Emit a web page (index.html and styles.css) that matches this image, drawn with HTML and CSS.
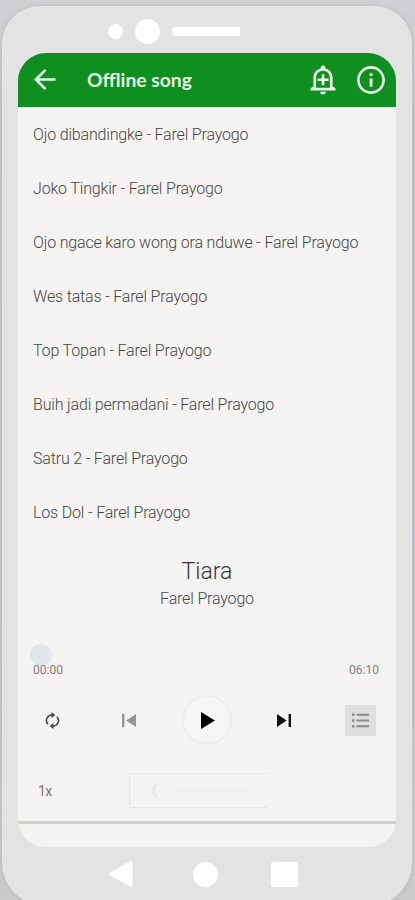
FILE: index.html
```html
<!DOCTYPE html>
<html lang="id">
<head>
<meta charset="utf-8">
<title>Offline song</title>
<link rel="stylesheet" href="styles.css">
</head>
<body>
<div class="phone">
  <div class="speaker"><i class="sensor"></i><i class="camera"></i><i class="grille"></i></div>
  <main class="screen">
    <header class="bar">
      <svg class="back" viewBox="0 0 24 24"><path d="M22.500 12H2M12 2L2 12l10 10" fill="none" stroke="currentColor" stroke-width="2.800"/></svg>
      <h1>Offline song</h1>
      <svg class="bell" viewBox="0 0 26 30"><path d="M13 .5a2.400 2.400 0 0 1 2.400 2.400v.7c4.400 1.100 7.200 4.700 7.200 9.400v8.500l2.900 1.700v2.300H.5v-2.300l2.900-1.700V13c0-4.700 2.800-8.300 7.200-9.400v-.7A2.400 2.400 0 0 1 13 .5zM13 5.700c-4 0-6.900 3-6.900 7.300v9.700h13.800V13c0-4.300-2.900-7.300-6.900-7.300zM11.700 9.200h2.700v4.200h4.200v2.700h-4.200v4.200h-2.700v-4.200H7.500v-2.700h4.200zM10.300 26.700h5.400a2.700 2.700 0 0 1-5.400 0z" fill="currentColor" fill-rule="evenodd"/></svg>
      <svg class="info" viewBox="0 0 28 28"><circle cx="14" cy="14" r="12.600" fill="none" stroke="currentColor" stroke-width="2.600"/><path d="M12.600 7.200h2.900v2.800h-2.900zM12.600 12.500h2.900v8.300h-2.900z" fill="currentColor"/></svg>
    </header>
    <ul class="songs">
      <li>Ojo dibandingke - Farel Prayogo</li>
      <li>Joko Tingkir - Farel Prayogo</li>
      <li>Ojo ngace karo wong ora nduwe - Farel Prayogo</li>
      <li>Wes tatas - Farel Prayogo</li>
      <li>Top Topan - Farel Prayogo</li>
      <li>Buih jadi permadani - Farel Prayogo</li>
      <li>Satru 2 - Farel Prayogo</li>
      <li>Los Dol - Farel Prayogo</li>
    </ul>
    <section class="now">
      <h2>Tiara</h2>
      <p>Farel Prayogo</p>
    </section>
    <div class="seek"><i class="knob"></i></div>
    <div class="times"><span>00:00</span><span>06:10</span></div>
    <div class="controls">
      <svg class="repeat" viewBox="0 0 16 18"><g fill="none" stroke="currentColor" stroke-width="1.700"><path d="M3.200 13A5.800 5.800 0 0 1 7.600 3.200M12.800 5A5.800 5.800 0 0 1 8.400 14.800"/></g><path d="M7 0l4 3.200-4 3.200zM9 11.600v6.400l-4-3.200z" fill="currentColor"/></svg>
      <svg class="prev" viewBox="0 0 14 13"><path d="M0 0h2.400v13H0zM14 0v13L4 6.500z" fill="currentColor"/></svg>
      <div class="play"><svg viewBox="0 0 14 17"><path d="M0 0v17l14-8.500z" fill="currentColor"/></svg></div>
      <svg class="next" viewBox="0 0 14 13"><path d="M11.600 0H14v13h-2.400zM0 0v13l9.700-6.500z" fill="currentColor"/></svg>
      <div class="queue"><svg viewBox="0 0 17 15"><path d="M0 .5h2.500V3H0zM0 6.200h2.500v2.500H0zM0 12h2.500v2.500H0zM4.500.7H17v2H4.500zM4.500 6.500H17v2H4.500zM4.500 12.200H17v2H4.500z" fill="currentColor"/></svg></div>
    </div>
    <div class="extras">
      <span class="speed">1x</span>
      <div class="timer"><svg viewBox="0 0 12 16"><path d="M10 0a8 8 0 1 0 0 16C5 13 5 3 10 0z" fill="currentColor"/></svg><i></i></div>
    </div>
  </main>
  <nav class="keys">
    <svg viewBox="0 0 24 26"><path d="M22 1.500v23L1.500 13z" fill="#fff" stroke="#fff" stroke-width="3" stroke-linejoin="round"/></svg>
    <i class="home"></i><i class="recent"></i>
  </nav>
</div>
</body>
</html>
```

FILE: styles.css
```css
* { box-sizing: border-box; margin: 0; padding: 0; }
svg { display: block; flex: none; }
i { display: block; flex: none; }
body {
  height: 900px;
  overflow: hidden;
  padding: 6px 3px 0 2px;
  background: linear-gradient(#d0d1d3, #bfc7d0 12%, #bdc4cc 55%, #c6c6c6 80%, #cacaca);
  font-family: Roboto, sans-serif;
}
.phone {
  height: 900px;
  padding: 0 16px;
  border-radius: 38px 38px 44px 44px;
  background: #e3e3e3;
  box-shadow: 0 0 4px #b4b6b8, inset 0 0 2px #eee;
}
.speaker {
  display: flex;
  align-items: center;
  height: 47px;
  padding: 3px 0 0 90px;
}
.sensor { width: 15px; height: 15px; border-radius: 50%; background: #fff; }
.camera { width: 25px; height: 25px; margin-left: 12px; border-radius: 50%; background: #fff; }
.grille { width: 68px; height: 9px; margin-left: 12px; border-radius: 4px 0 0 4px; background: #fff; }
.screen {
  height: 794px;
  border-radius: 28px 28px 27px 27px;
  overflow: hidden;
  background: #f5f4f2;
  color: #454545;
  font-weight: 300;
}
.bar {
  display: flex;
  align-items: center;
  height: 54px;
  padding: 0 11px 1px 16px;
  background: #0e8f20;
  color: #e6fae5;
}
.back { width: 23px; height: 23px; }
.bar h1 {
  flex: 1;
  margin-left: 30px;
  font: 700 19.300px/26px Lato, sans-serif;
}
.bell { width: 26px; height: 30px; margin-right: 21px; }
.info { width: 28px; height: 28px; }
.songs { list-style: none; }
.songs li {
  display: flex;
  align-items: center;
  height: 54px;
  padding: 1px 0 0 15px;
  font-size: 16px;
  letter-spacing: -.17px;
  white-space: nowrap;
}
.now { padding-top: 19px; text-align: center; }
.now h2 { font-size: 23px; font-weight: 300; line-height: 28px; color: #353535; }
.now p { font-size: 16px; line-height: 20px; padding-top: 3px; letter-spacing: -.17px; }
.seek {
  display: flex;
  align-items: center;
  height: 22px;
  margin: 35px 17px 0 12px;
  background: linear-gradient(#f1f0ee, #f1f0ee) center / 100% 1px no-repeat;
}
.knob { width: 22px; height: 22px; border-radius: 50%; background: #e2e6ea; }
.times {
  display: flex;
  justify-content: space-between;
  height: 12px;
  margin-top: -3px;
  padding: 0 17px 0 15px;
  font-size: 12px;
  line-height: 14px;
  font-weight: 400;
  color: #7d7d7d;
}
.controls {
  display: flex;
  align-items: center;
  height: 50px;
  margin-top: 20px;
  padding-left: 27px;
}
.repeat { width: 15px; height: 17px; color: #444; }
.prev { width: 14px; height: 13px; margin-left: 62px; color: #959595; }
.play {
  display: flex;
  align-items: center;
  justify-content: center;
  width: 50px;
  height: 50px;
  margin-left: 46px;
  padding-left: 2px;
  border: 2px solid #ebeded;
  border-radius: 50%;
  background: #f7f6f4;
  color: #000;
}
.play svg { width: 14px; height: 17px; }
.next { width: 14px; height: 13px; margin-left: 45px; color: #111; }
.queue {
  display: flex;
  align-items: center;
  justify-content: center;
  width: 31px;
  height: 31px;
  margin-left: 54px;
  background: #dfdfde;
  color: #8a8b8a;
}
.queue svg { width: 17px; height: 15px; }
.extras {
  display: flex;
  align-items: center;
  height: 79px;
  padding: 15px 0 0 20px;
  border-bottom: 3px solid #d0cfcc;
}
.speed { width: 91px; font-size: 14px; font-weight: 400; letter-spacing: -.5px; color: #757575; }
.timer {
  display: flex;
  align-items: center;
  width: 139px;
  height: 35px;
  padding-left: 20px;
  border: 1.500px solid #e5e4e2;
  border-right: 0;
  border-radius: 2px 0 0 2px;
  color: #e5e9eb;
}
.timer svg { width: 11px; height: 16px; }
.timer i { width: 80px; height: 2px; margin-left: 12px; background: #f1f1ef; }
.keys { display: flex; align-items: center; height: 54px; padding-left: 91px; }
.keys svg { width: 24px; height: 26px; }
.home { width: 25px; height: 25px; margin-left: 60px; border-radius: 50%; background: #fff; }
.recent { width: 27px; height: 25px; margin-left: 53px; border-radius: 2px; background: #fff; }
```
